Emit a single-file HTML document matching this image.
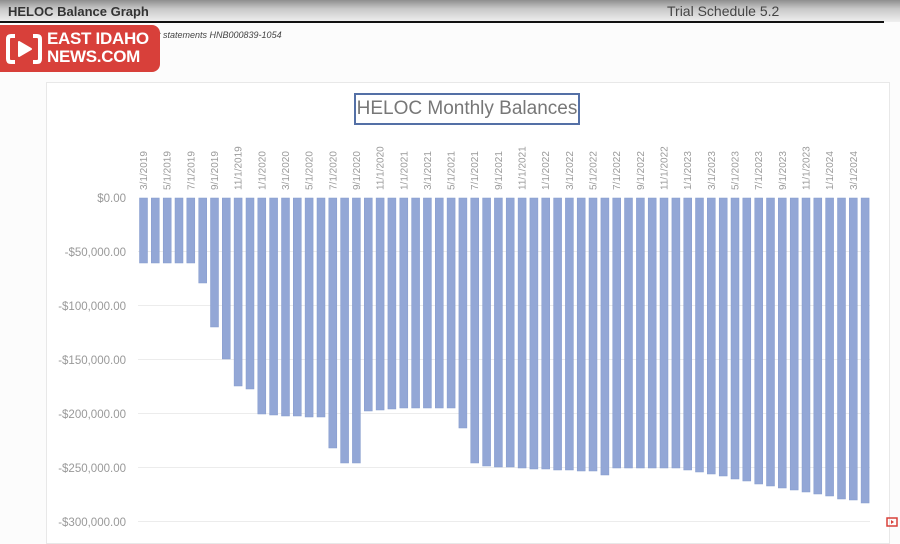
<!DOCTYPE html>
<html><head><meta charset="utf-8"><style>
html,body{margin:0;padding:0;width:900px;height:531px;overflow:hidden;background:#fcfcfc;font-family:"Liberation Sans",sans-serif;}
.top{position:absolute;left:0;top:0;width:900px;height:22px;background:linear-gradient(#8e8e8e,#c8c8c8 40%,#f0f0f0);}
.t1{position:absolute;left:8px;top:4px;font-size:13px;font-weight:600;color:#333;}
.t2{position:absolute;left:667px;top:3px;font-size:14px;color:#444;}
.line{position:absolute;left:0;top:21px;width:884px;height:2px;background:#111;}
.sub{position:absolute;left:158px;top:30px;font-size:9px;font-style:italic;color:#444;}
.logo{position:absolute;left:0;top:25px;width:160px;height:47px;background:#d8403a;border-radius:0 8px 8px 0;}
.logo .txt{position:absolute;left:47px;top:5px;color:#fff;font-weight:bold;font-size:17px;line-height:18px;letter-spacing:-0.3px;}
.panel{position:absolute;left:46px;top:82px;width:842px;height:460px;border:1px solid #e8e8e8;background:#fff;}
.title{position:absolute;left:354px;top:93px;width:222px;height:28px;border:2px solid #5470a6;font-size:19px;color:#777;text-align:center;line-height:28px;background:#fff;}
</style></head><body>
<div class="top"></div>
<div class="t1">HELOC Balance Graph</div>
<div class="t2">Trial Schedule 5.2</div>
<div class="line"></div>
<div class="sub">t statements HNB000839-1054</div>
<div class="panel"></div>
<div class="title">HELOC Monthly Balances</div>
<svg style="position:absolute;left:0;top:0" width="900" height="531" font-family="Liberation Sans, sans-serif">
<g stroke="#ececec" stroke-width="1">
<line x1="138" y1="251.5" x2="870" y2="251.5"/><line x1="138" y1="305.5" x2="870" y2="305.5"/><line x1="138" y1="359.5" x2="870" y2="359.5"/><line x1="138" y1="413.5" x2="870" y2="413.5"/><line x1="138" y1="467.5" x2="870" y2="467.5"/><line x1="138" y1="521.5" x2="870" y2="521.5"/>
</g>
<g font-size="11.5" fill="#999" text-anchor="end">
<text x="126" y="202">$0.00</text><text x="126" y="256">-$50,000.00</text><text x="126" y="310">-$100,000.00</text><text x="126" y="364">-$150,000.00</text><text x="126" y="418">-$200,000.00</text><text x="126" y="472">-$250,000.00</text><text x="126" y="526">-$300,000.00</text>
</g>
</svg>
<svg style="position:absolute;left:0;top:0" width="900" height="531">
<g fill="#93a7d6" stroke="#8399cc" stroke-width="0.5">
<rect x="139.5" y="198" width="8" height="65"/><rect x="151.3" y="198" width="8" height="65"/><rect x="163.2" y="198" width="8" height="65"/><rect x="175" y="198" width="8" height="65"/><rect x="186.8" y="198" width="8" height="65"/>
<rect x="198.7" y="198" width="8" height="85"/><rect x="210.5" y="198" width="8" height="129"/><rect x="222.3" y="198" width="8" height="161"/><rect x="234.1" y="198" width="8" height="188"/><rect x="246" y="198" width="8" height="191"/>
<rect x="257.8" y="198" width="8" height="216"/><rect x="269.6" y="198" width="8" height="217"/><rect x="281.5" y="198" width="8" height="218"/><rect x="293.3" y="198" width="8" height="218"/><rect x="305.1" y="198" width="8" height="219"/><rect x="317" y="198" width="8" height="219"/>
<rect x="328.8" y="198" width="8" height="250"/><rect x="340.6" y="198" width="8" height="265"/><rect x="352.4" y="198" width="8" height="265"/>
<rect x="364.3" y="198" width="8" height="213"/><rect x="376.1" y="198" width="8" height="212"/><rect x="387.9" y="198" width="8" height="211"/><rect x="399.8" y="198" width="8" height="210"/><rect x="411.6" y="198" width="8" height="210"/><rect x="423.4" y="198" width="8" height="210"/><rect x="435.3" y="198" width="8" height="210"/><rect x="447.1" y="198" width="8" height="210"/>
<rect x="458.9" y="198" width="8" height="230"/><rect x="470.7" y="198" width="8" height="265"/>
<rect x="482.6" y="198" width="8" height="268"/><rect x="494.4" y="198" width="8" height="269"/><rect x="506.2" y="198" width="8" height="269"/><rect x="518.1" y="198" width="8" height="270"/><rect x="529.9" y="198" width="8" height="271"/><rect x="541.7" y="198" width="8" height="271"/><rect x="553.6" y="198" width="8" height="272"/><rect x="565.4" y="198" width="8" height="272"/><rect x="577.2" y="198" width="8" height="273"/><rect x="589" y="198" width="8" height="273"/>
<rect x="600.9" y="198" width="8" height="277"/>
<rect x="612.7" y="198" width="8" height="270"/><rect x="624.5" y="198" width="8" height="270"/><rect x="636.4" y="198" width="8" height="270"/><rect x="648.2" y="198" width="8" height="270"/><rect x="660" y="198" width="8" height="270"/><rect x="671.9" y="198" width="8" height="270"/>
<rect x="683.7" y="198" width="8" height="272"/><rect x="695.5" y="198" width="8" height="274"/><rect x="707.3" y="198" width="8" height="276"/><rect x="719.2" y="198" width="8" height="278"/><rect x="731" y="198" width="8" height="281"/><rect x="742.8" y="198" width="8" height="283"/><rect x="754.7" y="198" width="8" height="286"/><rect x="766.5" y="198" width="8" height="288"/><rect x="778.3" y="198" width="8" height="290"/><rect x="790.2" y="198" width="8" height="292"/><rect x="802" y="198" width="8" height="294"/><rect x="813.8" y="198" width="8" height="296"/><rect x="825.6" y="198" width="8" height="298"/><rect x="837.5" y="198" width="8" height="301"/><rect x="849.3" y="198" width="8" height="302"/><rect x="861.1" y="198" width="8" height="305"/>
</g>
<g font-family="Liberation Sans, sans-serif" font-size="10" fill="#9a9a9a">
<text transform="translate(147,190) rotate(-90)">3/1/2019</text>
<text transform="translate(170.7,190) rotate(-90)">5/1/2019</text>
<text transform="translate(194.3,190) rotate(-90)">7/1/2019</text>
<text transform="translate(218,190) rotate(-90)">9/1/2019</text>
<text transform="translate(241.6,190) rotate(-90)">11/1/2019</text>
<text transform="translate(265.3,190) rotate(-90)">1/1/2020</text>
<text transform="translate(289,190) rotate(-90)">3/1/2020</text>
<text transform="translate(312.6,190) rotate(-90)">5/1/2020</text>
<text transform="translate(336.3,190) rotate(-90)">7/1/2020</text>
<text transform="translate(359.9,190) rotate(-90)">9/1/2020</text>
<text transform="translate(383.6,190) rotate(-90)">11/1/2020</text>
<text transform="translate(407.3,190) rotate(-90)">1/1/2021</text>
<text transform="translate(430.9,190) rotate(-90)">3/1/2021</text>
<text transform="translate(454.6,190) rotate(-90)">5/1/2021</text>
<text transform="translate(478.2,190) rotate(-90)">7/1/2021</text>
<text transform="translate(501.9,190) rotate(-90)">9/1/2021</text>
<text transform="translate(525.6,190) rotate(-90)">11/1/2021</text>
<text transform="translate(549.2,190) rotate(-90)">1/1/2022</text>
<text transform="translate(572.9,190) rotate(-90)">3/1/2022</text>
<text transform="translate(596.5,190) rotate(-90)">5/1/2022</text>
<text transform="translate(620.2,190) rotate(-90)">7/1/2022</text>
<text transform="translate(643.9,190) rotate(-90)">9/1/2022</text>
<text transform="translate(667.5,190) rotate(-90)">11/1/2022</text>
<text transform="translate(691.2,190) rotate(-90)">1/1/2023</text>
<text transform="translate(714.8,190) rotate(-90)">3/1/2023</text>
<text transform="translate(738.5,190) rotate(-90)">5/1/2023</text>
<text transform="translate(762.2,190) rotate(-90)">7/1/2023</text>
<text transform="translate(785.8,190) rotate(-90)">9/1/2023</text>
<text transform="translate(809.5,190) rotate(-90)">11/1/2023</text>
<text transform="translate(833.1,190) rotate(-90)">1/1/2024</text>
<text transform="translate(856.8,190) rotate(-90)">3/1/2024</text>
</g>
<rect x="887" y="518" width="10" height="8" fill="none" stroke="#d8403a" stroke-width="1.5"/>
<path d="M891 520 L894 522 L891 524 Z" fill="#d8403a"/>
</svg>
<div class="logo">
<svg style="position:absolute;left:5px;top:8px" width="38" height="32">
<path d="M10 3 H6 Q3 3 3 6 V26 Q3 29 6 29 H10" fill="none" stroke="#fff" stroke-width="4"/>
<path d="M28 3 H32 Q35 3 35 6 V26 Q35 29 32 29 H28" fill="none" stroke="#fff" stroke-width="4"/>
<path d="M14 9 L26 16 L14 23 Z" fill="#fff" stroke="#fff" stroke-width="2" stroke-linejoin="round"/>
</svg>
<div class="txt">EAST IDAHO<br>NEWS.COM</div>
</div>
</body></html>
